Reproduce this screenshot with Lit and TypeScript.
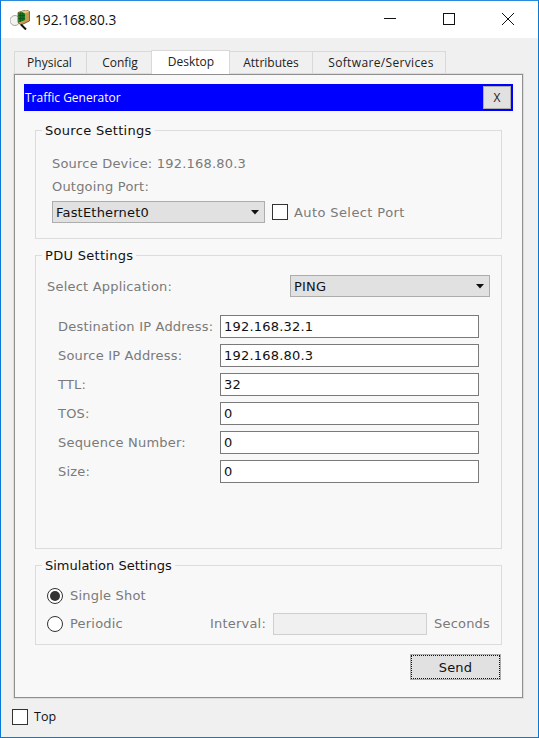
import { LitElement, html, css } from "lit";
import { customElement } from "lit/decorators.js";

const caret = html`<svg class="caret" width="8" height="5" viewBox="0 0 8 5"><path d="M0 0H8L4 4.500Z" fill="#111"/></svg>`;

@customElement("app-root")
export class AppRoot extends LitElement {
  static styles = css`
    :host { display: block; width: 539px; height: 738px; font-family: "DejaVu Sans", sans-serif; font-size: 13px; letter-spacing: 0.200px; color: #7a7a7a; }
    * { box-sizing: border-box; }
    .win { width: 539px; height: 738px; border: 1px solid #0a78d4; border-top-color: #2a8bdc; background: #f0f0f0; display: flex; flex-direction: column; }
    .title { height: 37px; flex: none; background: #fff; display: flex; align-items: center; padding-left: 9px; padding-right: 1px; }
    .logo { margin-top: 1px; flex: none; }
    .title .name { font-family: "Open Sans", sans-serif; font-size: 13.700px; letter-spacing: 0; color: #111; margin-left: 5px; }
    .title .ctl { margin-left: auto; display: flex; margin-top: -1px; }
    .ctl svg { display: block; }
    .ctl span { width: 59px; height: 37px; display: flex; align-items: center; justify-content: center; }
    .tabs { display: flex; height: 24px; margin: 11px 0 0 13px; flex: none; align-items: flex-end; font-family: "Open Sans", sans-serif; font-size: 12px; letter-spacing: 0; color: #222; }
    .tab { height: 22px; border: 1px solid #d9d9d9; border-bottom: none; border-left: none; background: #f0f0f0; display: flex; align-items: center; justify-content: center; padding-bottom: 1px; }
    .tab:first-child { border-left: 1px solid #d9d9d9; padding-right: 2px; }
    .tab.on { height: 24px; background: #fff; border-left: 1px solid #d9d9d9; margin-left: -1px; position: relative; z-index: 1; margin-bottom: -1px; padding-bottom: 2px; padding-left: 1px; }
    .tab.cfg { padding-left: 2px; }
    .tab.wide { letter-spacing: 0.350px; padding-left: 4px; }
    .pane { width: 511px; height: 626px; margin-left: 12px; border: 1px solid #dcdcdc; flex: none; }
    .inner { height: 100%; border: 1px solid #8f8f8f; background: #f8f8f8; padding: 9px 9px 0 9px; display: flex; flex-direction: column; }
    .bar { height: 27px; flex: none; background: #0000ff; color: #fff; display: flex; align-items: center; justify-content: space-between; padding: 0 2px 0 1px; width: 489px; font-family: "Open Sans", sans-serif; font-size: 12px; letter-spacing: 0; }
    .x { width: 28px; height: 23px; background: #e1e1e1; border: 1px solid #adadad; color: #222; display: flex; align-items: center; justify-content: center; font-size: 12px; }
    fieldset { margin: 0 0 0 11px; padding: 0; width: 467px; border: 1px solid #dcdcdc; flex: none; min-width: 0; }
    legend { margin-left: -5px; padding: 0 3px; height: 18px; line-height: 19px; color: #111; font-size: 13px; letter-spacing: 0.300px; }
    .src legend { margin-left: -10px; }
    .sim legend { letter-spacing: 0; }
    .src { height: 118px; margin-top: 10px; padding: 13px 0 0 16px; }
    .line { height: 23px; line-height: 23px; white-space: nowrap; }
    .portrow { display: flex; align-items: center; margin-top: 3px; }
    .auto { letter-spacing: 0.400px; }
    .sel { height: 22px; background: #e1e1e1; border: 1px solid #adadad; color: #111; display: flex; align-items: center; justify-content: space-between; padding: 0 5px 0 3px; }
    .portrow .sel { width: 213px; }
    .box { width: 16px; height: 16px; border: 1px solid #333; background: #fff; flex: none; }
    .portrow .box { margin-left: 7px; margin-right: 6px; }
    .pdu { height: 303px; margin-top: 7px; padding: 11px 11px 0 11px; }
    .app { display: flex; justify-content: space-between; align-items: center; }
    .app .sel { width: 200px; }
    .grid { display: grid; grid-template-columns: 162px 259px; row-gap: 6px; margin: 18px 0 0 11px; align-items: center; }
    .inp { height: 23px; background: #fff; border: 1px solid #7a7a7a; color: #111; padding-left: 3px; line-height: 21px; }
    .sim { height: 89px; margin-top: 7px; padding: 10px 11px 0 11px; }
    .radio { width: 16px; height: 16px; border: 1px solid #333; border-radius: 50%; background: #fff; flex: none; display: flex; align-items: center; justify-content: center; }
    .radio i { width: 10px; height: 10px; border-radius: 50%; background: #333; }
    .srow { display: flex; align-items: center; height: 23px; }
    .srow + .srow { margin-top: 5px; }
    .srow .radio { margin-right: 7px; }
    .ilabel { margin-left: auto; margin-right: 7px; }
    .dis { width: 154px; height: 22px; background: #f0f0f0; border: 1px solid #cfcfcf; margin-right: 7px; }
    .act { display: flex; justify-content: flex-end; margin: 9px 12px 0 0; }
    .send { width: 91px; height: 26px; background: #e1e1e1; border: 1px solid #adadad; outline: 1px dotted #111; outline-offset: -2px; color: #111; display: flex; align-items: center; justify-content: center; }
    .foot { display: flex; align-items: center; margin: 9px 0 0 11px; font-family: "Open Sans", sans-serif; font-size: 12.500px; letter-spacing: 0; color: #111; }
    .foot .box { margin-right: 6px; }
  `;

  render() {
    const rows = [
      ["Destination IP Address:", "192.168.32.1"],
      ["Source IP Address:", "192.168.80.3"],
      ["TTL:", "32"],
      ["TOS:", "0"],
      ["Sequence Number:", "0"],
      ["Size:", "0"],
    ];
    return html`<div class="win">
      <div class="title">
        <svg class="logo" width="20" height="20" viewBox="0 0 20 20">
          <circle cx="5" cy="10.500" r="5" fill="#f2f2f2" stroke="#a8a8a8"/>
          <path d="M8 2.500L16 0L19.500 1.500V11L11 15L8 12.500Z" fill="#c39a52" stroke="#4f4020" stroke-width=".7"/>
          <path d="M8.300 3L15 1.500V10L8.300 12.500Z" fill="#0f7a22"/>
          <path d="M10.500 2.500V12M12.800 2V11M8.300 5.500H15M8.300 8.500H15" stroke="#0a4f18" stroke-width=".7"/>
          <path d="M11 1.500L16 0.300L19.300 1.600L15 3.500Z" fill="#e8cc8c"/>
          <path d="M11 14.500L16 19.500" stroke="#111" stroke-width="2"/>
        </svg>
        <span class="name">192.168.80.3</span>
        <div class="ctl">
          <span><svg width="12" height="12" viewBox="0 0 12 12"><path d="M0 5.500H12" stroke="#111"/></svg></span>
          <span><svg width="12" height="12" viewBox="0 0 12 12"><rect x=".5" y=".5" width="11" height="11" fill="none" stroke="#111"/></svg></span>
          <span><svg width="12" height="12" viewBox="0 0 12 12"><path d="M0 0L12 12M12 0L0 12" stroke="#111"/></svg></span>
        </div>
      </div>
      <div class="tabs">
        <div class="tab" style="width:73px">Physical</div>
        <div class="tab cfg" style="width:65px">Config</div>
        <div class="tab on" style="width:79px">Desktop</div>
        <div class="tab" style="width:83px">Attributes</div>
        <div class="tab wide" style="width:133px">Software/Services</div>
      </div>
      <div class="pane"><div class="inner">
        <div class="bar"><span>Traffic Generator</span><div class="x">X</div></div>
        <fieldset class="src">
          <legend>Source Settings</legend>
          <div class="line">Source Device: 192.168.80.3</div>
          <div class="line">Outgoing Port:</div>
          <div class="portrow">
            <div class="sel"><span>FastEthernet0</span>${caret}</div>
            <div class="box"></div><span class="auto">Auto Select Port</span>
          </div>
        </fieldset>
        <fieldset class="pdu">
          <legend>PDU Settings</legend>
          <div class="app"><span>Select Application:</span><div class="sel"><span>PING</span>${caret}</div></div>
          <div class="grid">
            ${rows.map(([l, v]) => html`<span>${l}</span><div class="inp">${v}</div>`)}
          </div>
        </fieldset>
        <fieldset class="sim">
          <legend>Simulation Settings</legend>
          <div class="srow"><div class="radio"><i></i></div><span>Single Shot</span></div>
          <div class="srow"><div class="radio"></div><span>Periodic</span><span class="ilabel">Interval:</span><div class="dis"></div><span>Seconds</span></div>
        </fieldset>
        <div class="act"><div class="send">Send</div></div>
      </div></div>
      <div class="foot"><div class="box"></div><span>Top</span></div>
    </div>`;
  }
}
